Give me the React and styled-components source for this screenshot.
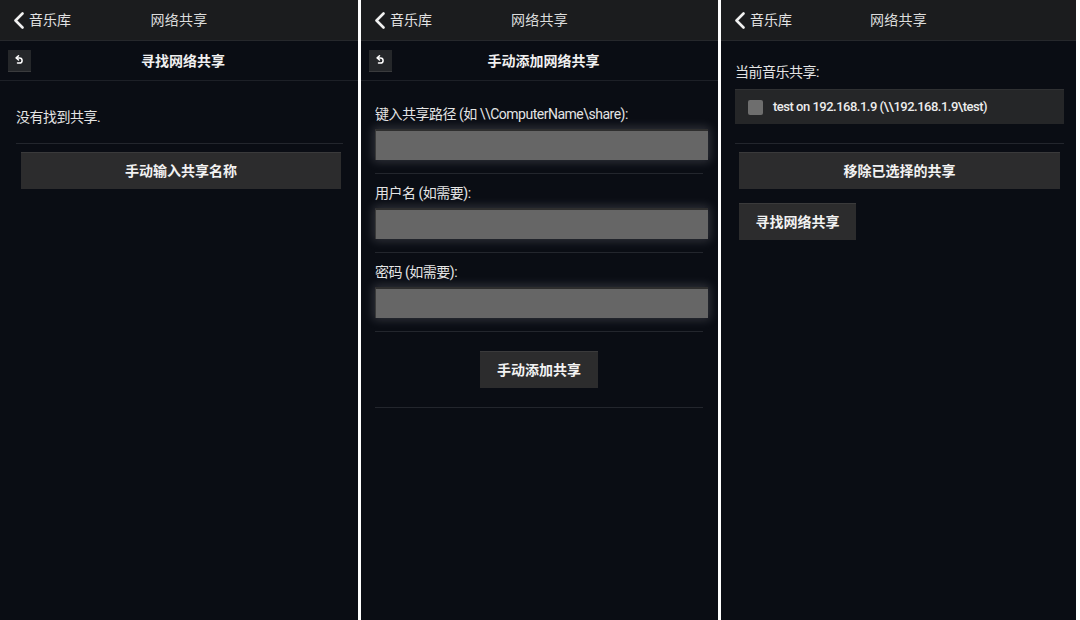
import React from "react";
import styled, { createGlobalStyle } from "styled-components";

const GlobalStyle = createGlobalStyle`
  html, body {
    margin: 0;
    padding: 0;
    background: #fff;
  }
  * {
    box-sizing: border-box;
  }
`;

const Screen = styled.div`
  display: flex;
  gap: 3px;
  width: 1080px;
  height: 620px;
  padding-right: 4px;
  background: #fff;
  font-family: Roboto, "Noto Sans CJK SC", sans-serif;
  color: #e6e6e6;
`;

const Panel = styled.div`
  width: ${p => p.width}px;
  display: flex;
  flex-direction: column;
  background: #0a0d14;
`;

const TopBar = styled.div`
  height: 41px;
  display: grid;
  grid-template-columns: 1fr auto 1fr;
  align-items: center;
  background: #1b1c1e;
  border-bottom: 1px solid #26282c;
  font-size: 14px;
  line-height: 20px;
`;

const BackLink = styled.div`
  display: flex;
  align-items: center;
  gap: 4px;
  padding-left: 13px;
  color: #e2e2e2;
`;

const Title = styled.div`
  color: #dcdcdc;
  letter-spacing: 0.3px;
`;

const SubBar = styled.div`
  height: 40px;
  display: grid;
  grid-template-columns: 1fr auto 1fr;
  align-items: center;
  border-bottom: 1px solid #1d2027;
  padding-left: 8px;
`;

const SmallBack = styled.div`
  width: 23px;
  height: 22px;
  display: flex;
  align-items: center;
  justify-content: center;
  background: #25272a;
  border-bottom: 1px solid #3a3b3d;
`;

const SubTitle = styled.div`
  font-size: 14px;
  line-height: 20px;
  font-weight: 700;
  color: #f0f0f0;
`;

const Body = styled.div`
  padding: ${p => p.pad};
  display: flex;
  flex-direction: column;
`;

const Text = styled.div`
  font-size: 14px;
  line-height: 20px;
  color: #e4e4e4;
  letter-spacing: -0.5px;
`;

const Divider = styled.div`
  height: 1px;
  background: #23262d;
  margin: ${p => p.m || "0"};
`;

const Button = styled.div`
  height: 37px;
  width: ${p => (p.w ? `${p.w}px` : "auto")};
  margin: ${p => p.m || "0"};
  display: flex;
  align-items: center;
  justify-content: center;
  align-self: ${p => p.align || "stretch"};
  background: #2c2c2d;
  border-top: 1px solid #3a3a3b;
  font-size: 14px;
  line-height: 20px;
  font-weight: 700;
  color: #f2f2f2;
`;

const Field = styled.div`
  padding: 9px 0 13px;
  border-bottom: 1px solid #23262d;
  display: flex;
  flex-direction: column;
  gap: 5px;
`;

const Input = styled.div`
  height: 31px;
  margin-right: -5px;
  background: #666;
  border-top: 2px solid #2e2e2e;
  border-left: 1px solid #3a3a3a;
  box-shadow: 0 0 9px 2px rgba(200, 200, 210, 0.2);
`;

const ButtonRow = styled.div`
  display: flex;
  justify-content: center;
  padding: 19px 0;
  border-bottom: 1px solid #23262d;
`;

const ShareRow = styled.div`
  height: 35px;
  margin-top: 7px;
  display: flex;
  align-items: center;
  gap: 10px;
  padding-left: 13px;
  background: #252628;
  border-top: 1px solid #303133;
`;

const Check = styled.div`
  width: 15px;
  height: 15px;
  border-radius: 2px;
  background: #6e6e6e;
`;

const ShareText = styled.div`
  font-size: 13px;
  line-height: 18px;
  color: #ececec;
  font-weight: 500;
  letter-spacing: -0.5px;
`;

const Chevron = () => (
  <svg width="12" height="17" viewBox="0 0 12 17">
    <polyline points="9.5,1.5 2.5,8.5 9.5,15.5" fill="none" stroke="#f0f0f0" strokeWidth="2.6" strokeLinecap="round" strokeLinejoin="round" />
  </svg>
);

const UndoIcon = () => (
  <svg width="9" height="10" viewBox="0 0 9 10">
    <path d="M3.5 0.8 1.2 2.9 3.5 5" fill="none" stroke="#fff" strokeWidth="1.5" strokeLinecap="round" strokeLinejoin="round" />
    <path d="M1.5 2.9h3a2.6 2.6 0 0 1 0 5.2H2.5" fill="none" stroke="#fff" strokeWidth="1.5" strokeLinecap="round" />
  </svg>
);

const Header = () => (
  <TopBar>
    <BackLink>
      <Chevron />
      音乐库
    </BackLink>
    <Title>网络共享</Title>
    <div />
  </TopBar>
);

const Sub = ({ title }) => (
  <SubBar>
    <SmallBack>
      <UndoIcon />
    </SmallBack>
    <SubTitle>{title}</SubTitle>
    <div />
  </SubBar>
);

const App = () => {
  return (
    <>
      <GlobalStyle />
      <Screen>
        <Panel width={358}>
          <Header />
          <Sub title="寻找网络共享" />
          <Body pad="26px 15px 0 16px">
            <Text>没有找到共享.</Text>
            <Divider m="16px 0 0" />
            <Button m="8px 2px 0 5px">手动输入共享名称</Button>
          </Body>
        </Panel>

        <Panel width={357}>
          <Header />
          <Sub title="手动添加网络共享" />
          <Body pad="14px 15px 0 14px">
            <Field>
              <Text>键入共享路径 (如 \\ComputerName\share):</Text>
              <Input />
            </Field>
            <Field>
              <Text>用户名 (如需要):</Text>
              <Input />
            </Field>
            <Field>
              <Text>密码 (如需要):</Text>
              <Input />
            </Field>
            <ButtonRow>
              <Button w={118}>手动添加共享</Button>
            </ButtonRow>
          </Body>
        </Panel>

        <Panel width={355}>
          <Header />
          <Body pad="21px 12px 0 14px">
            <Text>当前音乐共享:</Text>
            <ShareRow>
              <Check />
              <ShareText>test on 192.168.1.9 (\\192.168.1.9\test)</ShareText>
            </ShareRow>
            <Divider m="19px 0 0" />
            <Button m="8px 4px 0 4px">移除已选择的共享</Button>
            <Button w={117} m="14px 0 0 4px" align="flex-start">寻找网络共享</Button>
          </Body>
        </Panel>
      </Screen>
    </>
  );
};

export default App;
